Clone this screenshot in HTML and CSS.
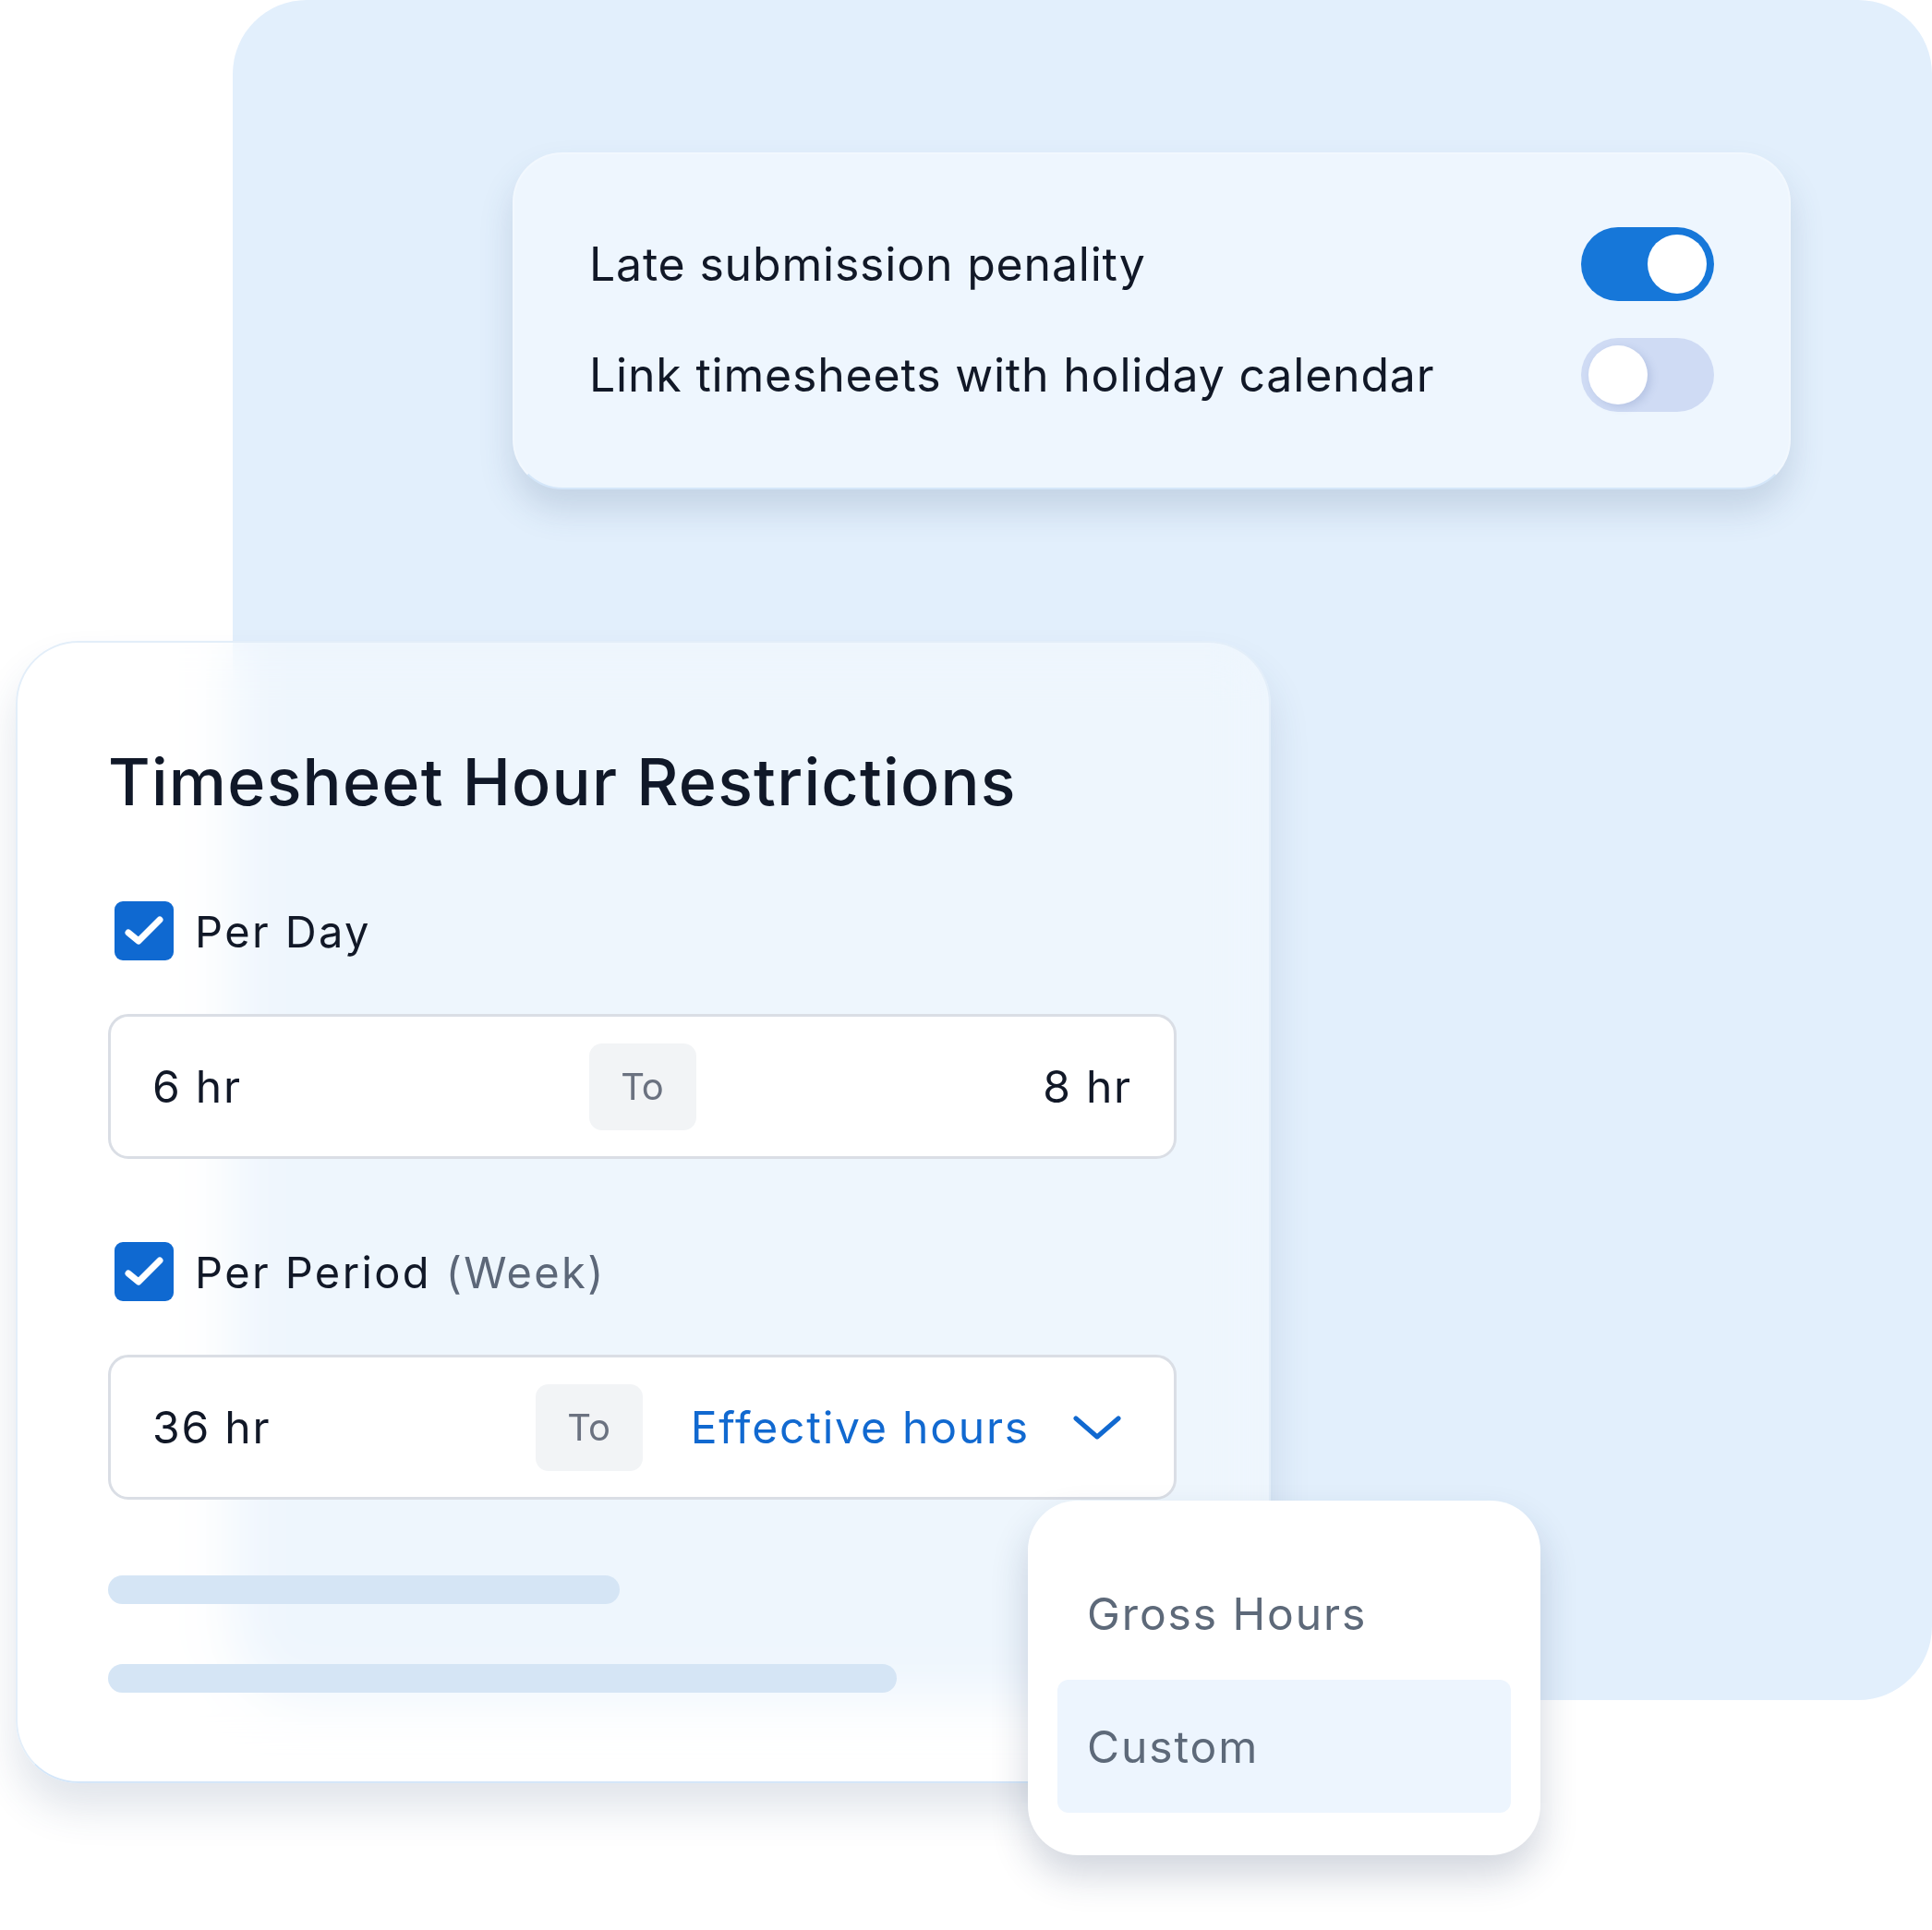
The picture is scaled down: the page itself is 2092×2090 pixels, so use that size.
FILE: index.html
```html
<!DOCTYPE html>
<html>

<head>
    <meta charset="UTF-8" />
    <meta name="viewport" content="width=device-width, initial-scale=1.0" />
    <title>Timesheet Settings</title>
    <link rel="stylesheet" href="styles.css">
</head>

<body>
    <div class="scene">
        <div class="backdrop"></div>

        <div class="settings-card">
            <div class="setting-row">
                <span class="setting-label">Late submission penality</span>
                <span class="toggle on"><span class="knob"></span></span>
            </div>
            <div class="setting-row">
                <span class="setting-label">Link timesheets with holiday calendar</span>
                <span class="toggle"><span class="knob"></span></span>
            </div>
        </div>

        <div class="restrict-card">
            <h2>Timesheet Hour Restrictions</h2>

            <div class="check-row">
                <span class="checkbox">
                    <svg viewBox="0 0 64 64" width="64" height="64">
                        <path d="M15 34 L26 43 L49 20" fill="none" stroke="#fff" stroke-width="7" stroke-linecap="round" stroke-linejoin="round" />
                    </svg>
                </span>
                <span class="check-label">Per Day</span>
            </div>
            <div class="range-field day">
                <span class="value">6 hr</span>
                <span class="to-chip">To</span>
                <span class="value right">8 hr</span>
            </div>

            <div class="check-row period">
                <span class="checkbox">
                    <svg viewBox="0 0 64 64" width="64" height="64">
                        <path d="M15 34 L26 43 L49 20" fill="none" stroke="#fff" stroke-width="7" stroke-linecap="round" stroke-linejoin="round" />
                    </svg>
                </span>
                <span class="check-label">Per Period <span class="muted">(Week)</span></span>
            </div>
            <div class="range-field period">
                <span class="value">36 hr</span>
                <span class="to-chip">To</span>
                <span class="select-value">Effective hours</span>
                <svg class="chevron" viewBox="0 0 52 26" width="52" height="26">
                    <path d="M3 3 L26 23 L49 3" fill="none" stroke="#1169d0" stroke-width="5" stroke-linecap="round" stroke-linejoin="round" />
                </svg>
            </div>

            <div class="skeleton short"></div>
            <div class="skeleton long"></div>
        </div>

        <ul class="dropdown">
            <li>Gross Hours</li>
            <li class="active">Custom</li>
        </ul>
    </div>
</body>

</html>
```

FILE: styles.css
```css
* {
    box-sizing: border-box;
    margin: 0;
    padding: 0;
}

body {
    background: #ffffff;
    font-family: Inter, "Liberation Sans", sans-serif;
    color: #111827;
}

.scene {
    position: relative;
    width: 2092px;
    height: 2090px;
    overflow: hidden;
}

.backdrop {
    position: absolute;
    left: 252px;
    top: 0;
    width: 1840px;
    height: 1841px;
    border-radius: 80px;
    background: #e2effc;
}

/* top settings card */
.settings-card {
    position: absolute;
    left: 555px;
    top: 165px;
    width: 1384px;
    height: 365px;
    padding: 79px 81px;
    display: flex;
    flex-direction: column;
    gap: 40px;
    background: #eef6fe;
    border: 2px solid #f2f8fe;
    border-bottom-color: #d4e6f9;
    border-radius: 54px;
    box-shadow: 0 22px 36px rgba(60, 90, 130, 0.18);
}

.setting-row {
    height: 80px;
    display: flex;
    align-items: center;
    justify-content: space-between;
}

.setting-label {
    font-size: 50px;
    line-height: 1;
    letter-spacing: 0.8px;
    color: #111827;
}

.toggle {
    width: 144px;
    height: 80px;
    border-radius: 40px;
    padding: 8px;
    display: flex;
    background: #cfdbf4;
}

.toggle.on {
    background: #1677d9;
    justify-content: flex-end;
}

.knob {
    width: 64px;
    height: 64px;
    border-radius: 50%;
    background: #ffffff;
    box-shadow: 4px 3px 8px rgba(80, 100, 160, 0.18);
}

.toggle.on .knob {
    box-shadow: none;
}

/* restrictions card */
.restrict-card {
    position: absolute;
    left: 17px;
    top: 694px;
    width: 1359px;
    height: 1237px;
    padding: 116px 100px 0 98px;
    background: rgba(255, 255, 255, 0.42);
    backdrop-filter: blur(30px);
    border: 2px solid #e3eef9;
    border-bottom-color: #d4e6f9;
    border-radius: 68px;
    box-shadow: 0 28px 44px rgba(40, 70, 110, 0.14);
}

h2 {
    font-size: 70px;
    line-height: 70px;
    font-weight: 500;
    letter-spacing: 1.25px;
    color: #101828;
}

.check-row {
    margin-top: 94px;
    height: 64px;
    display: flex;
    align-items: center;
    gap: 23px;
    padding-left: 7px;
}

.check-row.period {
    margin-top: 90px;
}

.checkbox {
    width: 64px;
    height: 64px;
    border-radius: 9px;
    background: #0f69d1;
    display: flex;
}

.check-label {
    font-size: 47px;
    line-height: 1;
    letter-spacing: 2.4px;
    color: #111827;
}

.muted {
    color: #5c6778;
}

.range-field {
    margin-top: 58px;
    height: 157px;
    border: 3px solid #dadee5;
    border-radius: 22px;
    background: #ffffff;
    padding: 0 45px;
    align-items: center;
}

.range-field.day {
    display: grid;
    grid-template-columns: 1fr auto 1fr;
}

.range-field.period {
    display: flex;
    padding-right: 57px;
}

.value {
    font-size: 48px;
    line-height: 1;
    letter-spacing: 1.8px;
    color: #111827;
}

.range-field.period .value {
    flex: 1;
}

.value.right {
    text-align: right;
}

.to-chip {
    width: 116px;
    height: 94px;
    border-radius: 14px;
    background: #f2f4f6;
    display: flex;
    align-items: center;
    justify-content: center;
    font-size: 40px;
    color: #6b7280;
}

.select-value {
    margin-left: 52px;
    font-size: 48px;
    line-height: 1;
    letter-spacing: 1.8px;
    color: #1169d0;
}

.chevron {
    margin-left: 47px;
}

.skeleton {
    height: 31px;
    border-radius: 16px;
    background: #d5e5f5;
}

.skeleton.short {
    margin-top: 82px;
    width: 554px;
}

.skeleton.long {
    margin-top: 65px;
    width: 854px;
}

/* dropdown */
.dropdown {
    position: absolute;
    left: 1113px;
    top: 1625px;
    width: 555px;
    height: 384px;
    list-style: none;
    padding: 50px 32px 46px;
    background: #ffffff;
    border-radius: 54px;
    box-shadow: 0 22px 40px rgba(30, 50, 90, 0.2);
}

.dropdown li {
    height: 144px;
    padding-left: 32px;
    display: flex;
    align-items: center;
    font-size: 48px;
    letter-spacing: 1.9px;
    color: #5d6979;
    border-radius: 12px;
}

.dropdown li.active {
    background: #edf5fe;
}
```
